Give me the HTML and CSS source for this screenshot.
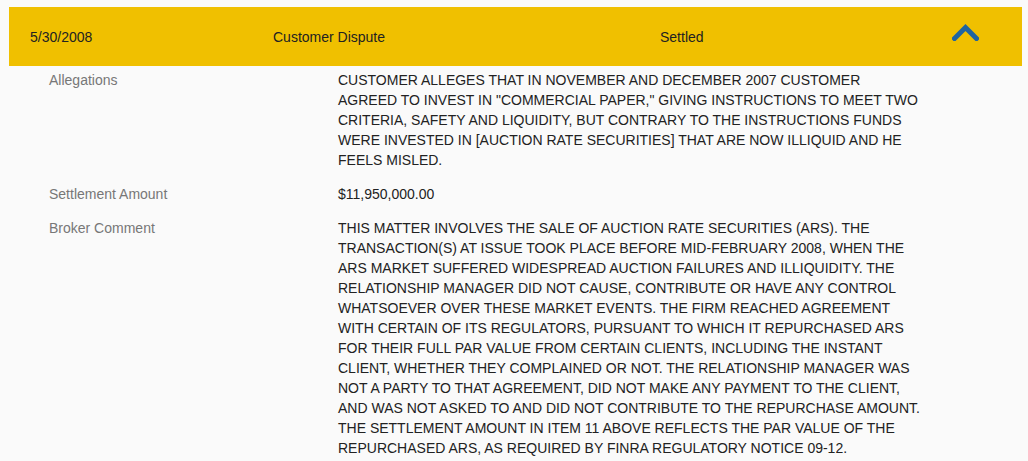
FILE: index.html
```html
<!DOCTYPE html>
<html>
<head>
<meta charset="utf-8">
<link rel="stylesheet" href="styles.css">
</head>
<body>
<div class="panel">
  <div class="header">
    <div class="cell">5/30/2008</div>
    <div class="cell">Customer Dispute</div>
    <div class="cell">Settled</div>
    <div class="toggle">
      <svg width="27" height="18" viewBox="0 0 27 18"><path d="M2.5 15.5 L13.5 4.5 L24.5 15.5" fill="none" stroke="#1f64a0" stroke-width="5" stroke-linecap="square" stroke-linejoin="miter"/></svg>
    </div>
  </div>
  <div class="details">
    <div class="label">Allegations</div>
    <div class="value">CUSTOMER ALLEGES THAT IN NOVEMBER AND DECEMBER 2007 CUSTOMER AGREED TO INVEST IN "COMMERCIAL PAPER," GIVING INSTRUCTIONS TO MEET TWO CRITERIA, SAFETY AND LIQUIDITY, BUT CONTRARY TO THE INSTRUCTIONS FUNDS WERE INVESTED IN [AUCTION RATE SECURITIES] THAT ARE NOW ILLIQUID AND HE FEELS MISLED.</div>
    <div class="label">Settlement Amount</div>
    <div class="value">$11,950,000.00</div>
    <div class="label">Broker Comment</div>
    <div class="value">THIS MATTER INVOLVES THE SALE OF AUCTION RATE SECURITIES (ARS). THE TRANSACTION(S) AT ISSUE TOOK PLACE BEFORE MID-FEBRUARY 2008, WHEN THE ARS MARKET SUFFERED WIDESPREAD AUCTION FAILURES AND ILLIQUIDITY. THE RELATIONSHIP MANAGER DID NOT CAUSE, CONTRIBUTE OR HAVE ANY CONTROL WHATSOEVER OVER THESE MARKET EVENTS. THE FIRM REACHED AGREEMENT WITH CERTAIN OF ITS REGULATORS, PURSUANT TO WHICH IT REPURCHASED ARS FOR THEIR FULL PAR VALUE FROM CERTAIN CLIENTS, INCLUDING THE INSTANT CLIENT, WHETHER THEY COMPLAINED OR NOT. THE RELATIONSHIP MANAGER WAS NOT A PARTY TO THAT AGREEMENT, DID NOT MAKE ANY PAYMENT TO THE CLIENT, AND WAS NOT ASKED TO AND DID NOT CONTRIBUTE TO THE REPURCHASE AMOUNT. THE SETTLEMENT AMOUNT IN ITEM 11 ABOVE REFLECTS THE PAR VALUE OF THE REPURCHASED ARS, AS REQUIRED BY FINRA REGULATORY NOTICE 09-12.</div>
  </div>
</div>
</body>
</html>
```
FILE: styles.css
```css
html, body {
  margin: 0;
  padding: 0;
  background: #fafafa;
}
body {
  padding: 7px 6px 0 9px;
  font-family: "Liberation Sans", Arial, sans-serif;
  font-size: 14px;
  color: #222;
}
.header {
  display: grid;
  grid-template-columns: 243px 387px 1fr auto;
  align-items: center;
  height: 59px;
  padding: 0 43px 0 21px;
  background: #f0c000;
  color: #222;
}
.cell {
  line-height: 20px;
}
.toggle {
  display: flex;
  align-items: center;
  padding-bottom: 9px;
}
.toggle svg {
  display: block;
}
.details {
  display: grid;
  grid-template-columns: 289px 582px;
  row-gap: 14px;
  padding: 4px 0 0 40px;
  line-height: 20px;
}
.label {
  color: #777;
}
.value {
  color: #222;
}
```
